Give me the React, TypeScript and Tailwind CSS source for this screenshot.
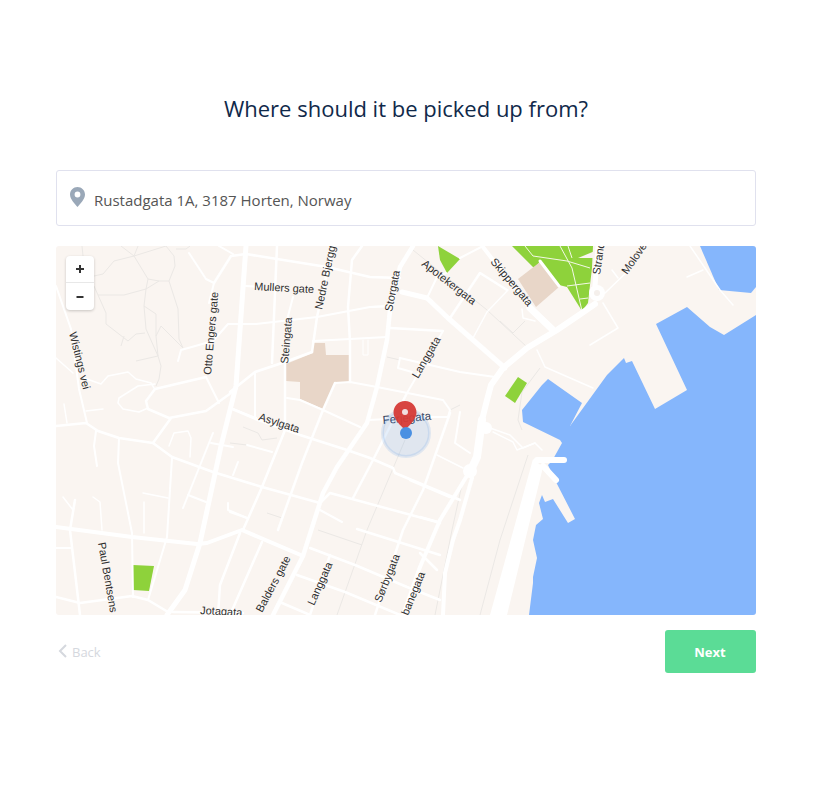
import React from "react";

const big: [number, string][] = [
  [5, "M246 246 L236 386 L221 446 L200 543 L185 590 L167 615"],
  [4, "M56 527 L132 537 L197 544 L207 543 L242 530 L303 556"],
  [4.5, "M413 246 L400 267 L390 310 L387 340 L377 387 L367 423 L337 467 L323 493 L303 556 L273 615"],
  [6, "M595 304 L582 313 L557 330 L527 348 L503 368 L491 385 L487 400 L482 420"],
  [8, "M482 420 L477 457 L470 472"],
  [4, "M468 474 L440 520 L420 567 L403 615"],
  [4, "M472 478 L460 520 L453 540 L445 573 L443 615"],
  [7, "M530 308 L552 329"],
  [4, "M483 247 L530 308"],
  [5, "M402 292 L427 298 L448 318 L505 368"],
  [5, "M598 246 L595 286"],
  [6, "M537 460 L564 460"],
  [6, "M543 466 L556 480"],
  [3, "M540 261 L559 286"],
];

const mid: [number, string][] = [
  [2, "M56 286 L71 329 L79 389 L87 423"],
  [1.5, "M56 358 L73 373"],
  [1.5, "M84 378 L101 384 L108 376 L128 372 L136 379 L151 383 L154 388"],
  [2.5, "M206 377 L155 389 L146 401 L148 409 L169 418 L206 411 L231 393 L237 388"],
  [2, "M206 377 L219 403"],
  [2, "M233 409 L256 418"],
  [1.5, "M155 384 L138 386 L119 398 L118 403 L123 409 L139 412 L148 408"],
  [1.5, "M64 404 L67 423"],
  [2.5, "M56 426 L86 423 L98 431 L119 438 L153 443 L171 418"],
  [1.5, "M86 411 L103 409"],
  [2, "M96 431 L94 446 L97 466"],
  [2, "M119 438 L118 463 L132 533 L133 597"],
  [1.5, "M169 446 L174 433 L188 431 L191 438 L190 457"],
  [2.5, "M153 443 L172 457 L213 472 L262 487 L320 503 L330 493 L437 522 L440 523"],
  [2, "M172 458 L167 537 L148 600"],
  [2, "M213 433 L183 508"],
  [2, "M211 443 L233 447"],
  [2, "M188 495 L206 502"],
  [2, "M178 361 L181 350 L213 341 L228 324 L256 324 L317 317 L370 307 L390 306"],
  [2.5, "M214 283 L231 256 L246 254"],
  [2, "M189 253 L206 279 L214 283 L209 303"],
  [2, "M219 246 L233 254"],
  [2, "M246 286 L262 287"],
  [2.5, "M246 254 L277 259 L327 267 L370 277 L400 278"],
  [2.5, "M277 246 L272 363"],
  [2, "M293 297 L287 320"],
  [2.5, "M333 246 L317 317 L312 352"],
  [2.5, "M362 246 L352 260 L348 307 L350 342 L350 382"],
  [2.5, "M230 392 L255 372 L285 362 L312 352"],
  [2, "M255 372 L255 417"],
  [2.5, "M285 362 L285 430 L262 487 L243 530"],
  [2.5, "M230 408 L258 420 L300 435 L347 450 L370 458 L393 468 L395 473 L460 500"],
  [2, "M287 398 L300 400 L323 410 L360 427"],
  [2.5, "M335 383 L323 410 L302 463 L278 530"],
  [2, "M335 383 L350 382 L377 387 L443 400 L450 410 L448 417 L430 417 L368 420"],
  [2, "M313 341 L387 337"],
  [1, "M363 340 L363 355 L368 355 L368 340"],
  [2, "M400 358 L398 368 L412 372"],
  [2, "M400 358 L460 372 L495 377"],
  [2, "M443 331 L407 393"],
  [2.5, "M407 393 L373 460 L353 498"],
  [2.5, "M450 413 L423 490 L403 530 L375 615"],
  [2, "M320 510 L342 522"],
  [2, "M230 512 L247 518"],
  [2, "M247 445 L272 452"],
  [2, "M238 462 L233 475"],
  [2, "M460 412 L455 443 L470 453"],
  [1.5, "M437 455 L463 468"],
  [2.5, "M410 480 L450 497"],
  [2.5, "M420 517 L438 522"],
  [2.5, "M420 553 L437 570"],
  [1.5, "M490 428 L510 435 L523 448 L535 443 L542 450"],
  [1.5, "M493 432 L513 442 L517 450 L535 443"],
  [2, "M228 503 L228 510 L247 518"],
  [2.5, "M75 500 L70 530 L80 615"],
  [1.5, "M63 497 L73 510 L75 500"],
  [1.5, "M93 497 L100 502 L102 530"],
  [2, "M56 548 L72 548"],
  [2.5, "M56 597 L80 603 L132 596 L148 600 L168 612"],
  [1.5, "M143 493 L168 498"],
  [1.5, "M144 502 L144 533"],
  [2.5, "M173 612 L243 613"],
  [2.5, "M240 533 L220 585 L218 615"],
  [2.5, "M262 542 L230 615"],
  [2.5, "M357 529 L440 555"],
  [2.5, "M310 548 L355 565 L407 587 L440 600"],
  [2.5, "M297 575 L345 592 L400 615"],
  [2.5, "M282 603 L310 615"],
  [2.5, "M330 555 L310 615"],
  [2.5, "M390 328 L443 331"],
  [2, "M370 307 L390 306"],
  [2.5, "M450 318 L480 273 L507 290"],
  [2, "M460 258 L483 246"],
  [2, "M427 298 L437 277 L446 273"],
  [1.5, "M508 290 L487 312 L473 338"],
  [1.5, "M522 309 L523 318 L535 321"],
  [1.5, "M537 350 L545 367 L593 388"],
  [1.5, "M690 246 L720 290 L733 305"],
  [1.5, "M687 277 L703 270"],
  [1.5, "M605 293 L630 269"],
  [1.5, "M603 303 L618 328 L590 345"],
  [1.5, "M612 270 L618 278"],
];

const gray: string[] = [
  "M413 250 L487 310 L527 347",
  "M500 321 L513 333 L525 321",
  "M405 440 L367 530 L337 615",
  "M267 513 L282 518",
  "M318 530 L362 545",
  "M540 368 L522 392 L518 420 L522 430",
  "M528 455 L500 540 L480 615",
  "M463 480 L452 530 L435 615",
  "M243 427 L258 433 L262 440 L277 438",
  "M230 443 L247 445",
  "M387 357 L400 360",
  "M450 410 L460 405",
  "M121 246 L134 256 L148 279 L146 289 L124 295 L98 295",
  "M134 256 L114 261 L103 274 L94 276",
  "M138 246 L134 256 L166 246 L174 256 L175 266 L169 281 L159 281 L148 279",
  "M169 281 L178 309 L179 339 L183 348",
  "M159 281 L146 289 L144 306 L146 329 L158 356 L161 366 L159 379 L156 386",
  "M144 306 L156 314 L156 336 L158 356",
  "M156 336 L161 326 L171 336 L183 348",
  "M94 286 L106 313 L106 324 L128 341 L136 334 L145 333",
  "M124 336 L121 346",
  "M136 361 L158 356",
  "M176 249 L186 249 L190 246",
  "M82 246 L83 256",
];

const labels: [string, number, number, number][] = [
  ["Mullers gate", 254, 290, 3],
  ["Nedre Bjerggata", 322, 310, -78],
  ["Otto Engers gate", 211, 375, -85],
  ["Steingata", 288, 364, -85],
  ["Wistings vei", 69, 333, 76],
  ["Asylgata", 258, 420, 18],
  ["Storgata", 392, 312, -79],
  ["Apotekergata", 421, 265, 38],
  ["Skippergata", 490, 262, 50],
  ["Strandpromenaden", 600, 275, -82],
  ["Moloveien", 627, 275, -55],
  ["Langgata", 418, 379, -60],
  ["Paul Bentsens gate", 98, 543, 80],
  ["Jotagata", 200, 614, 3],
  ["Balders gate", 262, 613, -62],
  ["Langgata", 314, 606, -66],
  ["Sørbygata", 381, 603, -68],
  ["banegata", 408, 616, -68],
];

function MapArt() {
  return (
    <svg viewBox="56 246 700 369" width="700" height="369" className="block">
      <rect x="56" y="246" width="700" height="369" fill="#faf5f1" />
      <g fill="none" stroke="#ebe8e5" strokeWidth="1">
        {gray.map((d, i) => (
          <path key={i} d={d} />
        ))}
      </g>
      <path
        fill="#85b6fc"
        d="M529 615 L533 583 L533 577 L537 558 L533 540 L536 525 L543 519 L539 503 L542 495 L545 502 L553 499 L568 523 L575 519 L556 482 L548 465 L552 461 L562 443 L560 440 L523 422 L522 410 L542 385 L548 379 L582 403 L570 426 L607 375 L624 358 L626 363 L632 361 L655 409 L687 390 L656 324 L687 307 L710 327 L724 335 L756 315 L756 615 Z"
      />
      <path fill="#85b6fc" d="M700 246 L719 290 L751 293 L756 287 L756 246 Z" />
      <path
        fill="#8ed23b"
        d="M512 246 L535 269 L540 261 L559 285 L567 287 L582 311 L588 303 L590 285 L592 268 L593 246 Z"
      />
      <path fill="#8ed23b" d="M438 246 L460 259 L447 273 L440 260 Z" />
      <path fill="#8ed23b" d="M518 377 L527 383 L515 403 L505 396 Z" />
      <path fill="#8ed23b" d="M133 565 L154 566 L149 591 L133 590 Z" />
      <g fill="none" stroke="#f3f8e6" strokeWidth="1">
        <path d="M525 246 L533 256 L567 261 L590 268" />
        <path d="M560 246 L572 268 L582 311" />
        <path d="M568 246 L572 258" />
        <path d="M567 286 L590 283" />
        <path d="M580 299 L588 298" />
      </g>
      <path fill="#faf5f1" d="M578 258 L595 251 L593 258 Z" />
      <path fill="#e8d6c8" d="M540 262 L559 287 L536 307 L518 279 Z" />
      <path
        fill="#e8d6c8"
        d="M313 343 L325 343 L326 355 L349 355 L350 382 L335 383 L323 409 L300 399 L300 382 L286 381 L286 364 L313 353 Z"
      />
      <g fill="none" stroke="#ffffff" strokeLinecap="round" strokeLinejoin="round">
        {mid.map(([w, d], i) => (
          <path key={i} d={d} strokeWidth={w} />
        ))}
        {big.map(([w, d], i) => (
          <path key={i} d={d} strokeWidth={w} />
        ))}
      </g>
      <path fill="#ffffff" d="M533 459 L543 467 L507 615 L490 615 Z" />
      <circle cx="597" cy="293" r="8" fill="#ffffff" />
      <circle cx="597" cy="293" r="3" fill="#f5f0ec" />
      <circle cx="470" cy="471" r="7" fill="#ffffff" />
      <circle cx="486" cy="428" r="6" fill="#ffffff" />
      <g fontFamily="'Liberation Sans', Arial, sans-serif" fontSize="11" fill="#2e2e2e">
        {labels.map(([t, x, y, r]) => (
          <text key={t + x} transform={`translate(${x} ${y}) rotate(${r})`}>
            {t}
          </text>
        ))}
        <text transform="translate(383 424) rotate(-5)" fill="#33415c" fontSize="11.5">
          Ferjegata
        </text>
      </g>
      <circle cx="406" cy="433" r="23.5" fill="#4a90e2" fillOpacity="0.14" stroke="#4a90e2" strokeOpacity="0.14" strokeWidth="3" />
      <path
        fill="#d63a36"
        fillOpacity="0.95"
        d="M405 401 C398 401 393.5 406.5 393.5 412.5 C393.5 419 400 425 405 430 C410 425 416.5 419 416.5 412.5 C416.5 406.5 412 401 405 401 Z"
      />
      <circle cx="405" cy="412" r="3" fill="#f1dfe0" />
      <circle cx="406" cy="433" r="6" fill="#4a90e2" />
    </svg>
  );
}

export default function App() {
  return (
    <div className="min-h-[799px] bg-white ml-14 w-[700px] pt-[93px] font-['Open_Sans',sans-serif]">
      <h1 className="text-center text-[22px] leading-[30px] font-normal text-[#10294a]">
        Where should it be picked up from?
      </h1>
      <div className="mt-[47px] h-14 border border-[#e0e1ee] rounded-[3px] flex items-center pl-[13px] gap-[9px]">
        <svg width="15" height="20" viewBox="0 0 15 20" className="-mt-[3px]">
          <path
            fill="#9aa8b8"
            fillRule="evenodd"
            d="M7.5 0C3.4 0 0 3.3 0 7.4 0 12 4.6 16.5 7.5 20 10.4 16.5 15 12 15 7.4 15 3.3 11.6 0 7.5 0ZM7.5 4.6a2.9 2.9 0 1 1 0 5.8 2.9 2.9 0 0 1 0-5.8Z"
          />
        </svg>
        <span className="text-[15px] text-[#555555] pt-[4px]">Rustadgata 1A, 3187 Horten, Norway</span>
      </div>
      <div className="relative mt-5 h-[369px] rounded-[3px] overflow-hidden">
        <MapArt />
        <div className="absolute left-[10px] top-[10px] w-7 h-[54px] bg-white rounded shadow-[0_1px_3px_rgba(0,0,0,0.2)] flex flex-col">
          <div className="h-[27px] border-b border-[#e8e8e8] flex items-center justify-center">
            <svg width="10" height="10" viewBox="0 0 10 10">
              <path d="M5 1V9M1 5H9" stroke="#333333" strokeWidth="2" />
            </svg>
          </div>
          <div className="h-[27px] flex items-center justify-center">
            <svg width="10" height="10" viewBox="0 0 10 10">
              <path d="M1.5 5H8.5" stroke="#333333" strokeWidth="2" />
            </svg>
          </div>
        </div>
      </div>
      <div className="mt-[15px] flex items-start justify-between">
        <div className="flex items-center h-[43px] gap-[5px] pl-[2px] text-[#d5d8de]">
          <svg width="9" height="14" viewBox="0 0 9 14" className="-mt-[2px]">
            <path d="M8 1L2 7L8 13" fill="none" stroke="#d5d8de" strokeWidth="2" />
          </svg>
          <span className="text-[13px] pt-[2px]">Back</span>
        </div>
        <div className="w-[91px] h-[43px] bg-[#5bdc96] rounded-[3px] flex items-center justify-center text-white font-bold text-[13px] pr-[1px] pt-[2px]">
          Next
        </div>
      </div>
    </div>
  );
}
